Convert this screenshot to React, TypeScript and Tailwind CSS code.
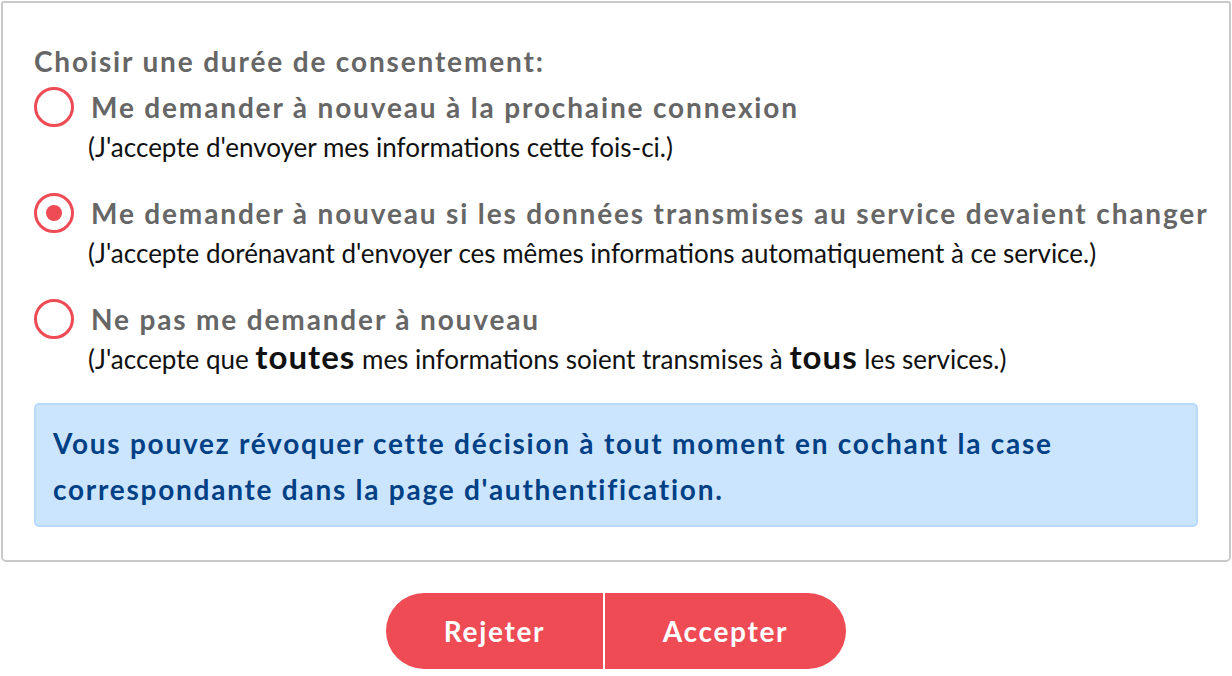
import React from 'react';

const options = [
  {
    label: 'Me demander à nouveau à la prochaine connexion',
    sub: <>(J'accepte d'envoyer mes informations cette fois-ci.)</>,
    checked: false,
  },
  {
    label: 'Me demander à nouveau si les données transmises au service devaient changer',
    sub: <>(J'accepte dorénavant d'envoyer ces mêmes informations automatiquement à ce service.)</>,
    checked: true,
  },
  {
    label: 'Ne pas me demander à nouveau',
    sub: (
      <>
        (J'accepte que <span className="text-[33px] font-bold leading-none tracking-[1px]">toutes</span> mes
        informations soient transmises à{' '}
        <span className="text-[33px] font-bold leading-none tracking-[1px]">tous</span> les services.)
      </>
    ),
    checked: false,
  },
];

const Radio = ({ checked }: { checked: boolean }) => (
  <span className="flex h-[40px] w-[40px] shrink-0 items-center justify-center rounded-full border-[3px] border-[#ee4b55] bg-white">
    {checked && <span className="h-[16px] w-[16px] rounded-full bg-[#ee4b55]" />}
  </span>
);

export default function App() {
  return (
    <div className="w-[1232px] bg-white font-['Lato','Open_Sans',sans-serif]">
      <div className="ml-px mt-px w-[1230px] rounded-b-[5px] rounded-t-[3px] border-2 border-[#c9c9c9] px-[31px] pb-[33px] pt-[40px]">
        <h2 className="text-[28px] font-bold leading-[36px] tracking-[1.85px] text-[#666]">
          Choisir une durée de consentement:
        </h2>
        <div className="mt-[8px] flex flex-col gap-[26px]">
          {options.map((o, i) => (
            <div key={i}>
              <div className="flex h-[40px] items-center gap-[17px]">
                <Radio checked={o.checked} />
                <span className="whitespace-nowrap text-[28px] font-bold tracking-[1.85px] text-[#666]">{o.label}</span>
              </div>
              <div className="flex h-[40px] items-center pl-[54px] text-[26px] leading-[40px] text-[#111]">
                <span className="whitespace-nowrap">{o.sub}</span>
              </div>
            </div>
          ))}
        </div>
        <div className="mt-[24px] rounded-[5px] border-2 border-[#b8daff] bg-[#cce5ff] pb-[13px] pl-[17px] pr-[17px] pt-[15px] text-[28px] font-bold leading-[46px] tracking-[1.75px] text-[#004085]">
          Vous pouvez révoquer cette décision à tout moment en cochant la case correspondante dans la page
          d'authentification.
        </div>
      </div>
      <div className="flex justify-center pb-[7px] pt-[31px]">
        <div className="flex h-[76px] overflow-hidden rounded-full">
          <button className="w-[217px] bg-[#ee4b55] text-[28px] font-bold tracking-[1.7px] text-white">Rejeter</button>
          <div className="w-[2px] bg-white" />
          <button className="w-[241px] bg-[#ee4b55] text-[28px] font-bold tracking-[1.7px] text-white">Accepter</button>
        </div>
      </div>
    </div>
  );
}
